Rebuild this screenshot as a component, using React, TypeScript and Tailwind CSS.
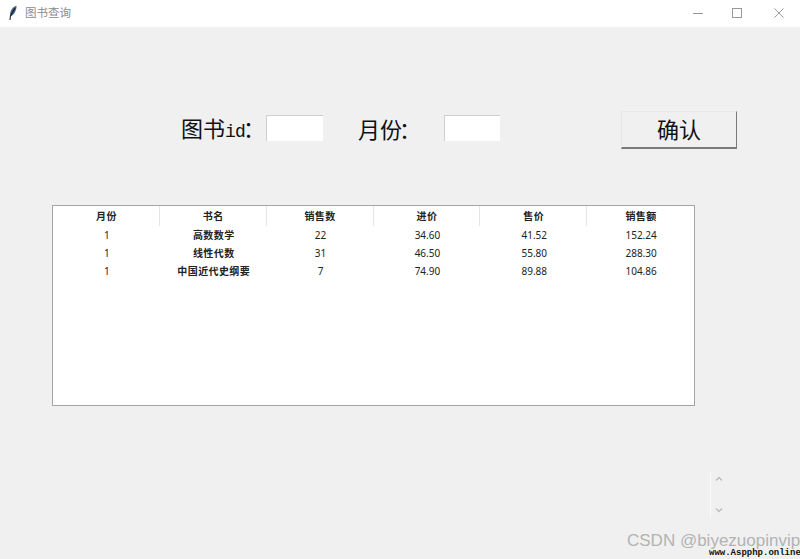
const rows = [
  ["1", "高数数学", "22", "34.60", "41.52", "152.24"],
  ["1", "线性代数", "31", "46.50", "55.80", "288.30"],
  ["1", "中国近代史纲要", "7", "74.90", "89.88", "104.86"],
];
const heads = ["月份", "书名", "销售数", "进价", "售价", "销售额"];
const cjk = "font-['Noto_Sans_CJK_SC',sans-serif]";

export default function App() {
  return (
    <div lang="zh-CN" className="relative w-[800px] h-[559px] overflow-hidden bg-[#f0f0f0] font-['Noto_Sans','Noto_Sans_CJK_SC',sans-serif]">
      <div className="h-[27px] bg-white flex items-center pl-[8px] pb-[2px]">
        <svg width="10" height="16" viewBox="0 0 10 16" className="mr-[7px]">
          <path d="M8.5 0.8C5 1.5 2.4 5 2 9.5L2.6 11.5C6 10 8.6 5.5 8.5 0.8Z" fill="#3f5f86" />
          <path d="M7 3L2.4 11L2 15" stroke="#111" strokeWidth="1" fill="none" />
        </svg>
        <span className="text-[11.5px] text-[#8c8c8c] font-['Noto_Sans_CJK_SC',sans-serif]">图书查询</span>
        <div className="ml-auto flex items-center h-full">
          <div className="w-[44px] flex justify-center">
            <svg width="10" height="10" viewBox="0 0 10 10"><path d="M0 5.5H10" stroke="#999" strokeWidth="1" /></svg>
          </div>
          <div className="w-[34px] flex justify-center">
            <svg width="10" height="10" viewBox="0 0 10 10"><rect x="0.5" y="0.5" width="9" height="9" fill="none" stroke="#999" strokeWidth="1" /></svg>
          </div>
          <div className="w-[46px] flex justify-center pl-[4px]">
            <svg width="10" height="10" viewBox="0 0 10 10"><path d="M0.5 0.5L9.5 9.5M9.5 0.5L0.5 9.5" stroke="#999" strokeWidth="1" /></svg>
          </div>
        </div>
      </div>

      <div className={`flex items-center pt-[84px] pl-[181px] h-[122px] text-[22px] leading-none text-[#111] ${cjk}`}>
        <span className="w-[85px] whitespace-nowrap pb-[4px]">
          图书<span className="font-['Liberation_Mono',monospace] text-[18px] tracking-[-0.8px]">id</span><span className="-ml-[2px]">：</span>
        </span>
        <div className="w-[57px] h-[26px] mb-[4px] bg-white border-t border-l border-[#cfcfcf]" />
        <span className="ml-[35px] w-[86px] whitespace-nowrap pb-[4px]">月份<span className="-ml-[3px]">：</span></span>
        <div className="w-[56px] h-[26px] mb-[4px] bg-white border-t border-l border-[#cfcfcf]" />
        <button className="ml-[121px] w-[116px] h-[38px] pb-[3px] bg-[#f0f0f0] border border-[#e8e8e8] border-r-[#7a7a7a] border-b-2 border-b-[#7a7a7a] text-[22px] text-[#111]">确认</button>
      </div>

      <div className="ml-[52px] mt-[56px] w-[643px] h-[201px] bg-white border border-[#a5a5a5]">
        <div className="grid grid-cols-6 h-[20px] items-center">
          {heads.map((h, i) => (
            <div key={h} className={`h-full flex items-center justify-center pl-[1px] pb-[2px] text-[10px] font-bold tracking-[0.4px] text-[#222] font-['Noto_Sans_CJK_SC',sans-serif] ${i < 5 ? "border-r border-[#e5e5e5]" : ""}`}>
              {h}
            </div>
          ))}
        </div>
        {rows.map((r) => (
          <div key={r[1]} className="grid grid-cols-6 h-[18px] items-center">
            {r.map((c, i) => (
              <div key={i} className={`text-center pl-[1px] text-[10px] leading-[14px] text-[#222] ${i === 1 ? "font-bold tracking-[0.4px] font-['Noto_Sans_CJK_SC',sans-serif]" : ""}`}>
                {c}
              </div>
            ))}
          </div>
        ))}
      </div>

      <div className="absolute left-[710px] top-[472px] w-[16px] h-[45px] border-l border-[#fafafa] flex flex-col justify-between items-center py-[4px]">
        <svg width="8" height="6" viewBox="0 0 8 6"><path d="M1 4.5L4 1.5L7 4.5" stroke="#bdbdbd" strokeWidth="1.3" fill="none" /></svg>
        <svg width="8" height="6" viewBox="0 0 8 6"><path d="M1 1.5L4 4.5L7 1.5" stroke="#bdbdbd" strokeWidth="1.3" fill="none" /></svg>
      </div>

      <div className="absolute left-[627px] top-[533px] text-[17px] leading-[16px] whitespace-nowrap text-[#b3b3b3] font-['Liberation_Sans',sans-serif]">CSDN @biyezuopinvip</div>
      <div className="absolute left-[709px] top-[549px] text-[9px] leading-[9px] whitespace-nowrap text-[#111] font-bold font-['Liberation_Mono',monospace]">www.Aspphp.online</div>
    </div>
  );
}
